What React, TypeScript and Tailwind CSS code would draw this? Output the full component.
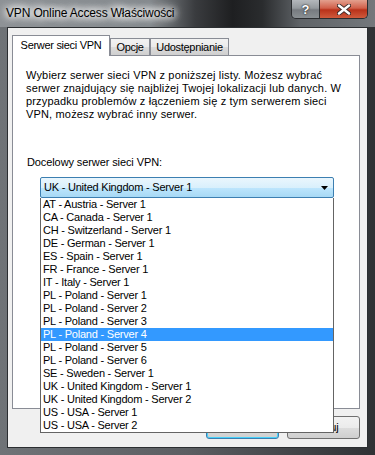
const servers = [
  "AT - Austria - Server 1",
  "CA - Canada - Server 1",
  "CH - Switzerland - Server 1",
  "DE - German - Server 1",
  "ES - Spain - Server 1",
  "FR - France - Server 1",
  "IT - Italy - Server 1",
  "PL - Poland - Server 1",
  "PL - Poland - Server 2",
  "PL - Poland - Server 3",
  "PL - Poland - Server 4",
  "PL - Poland - Server 5",
  "PL - Poland - Server 6",
  "SE - Sweden - Server 1",
  "UK - United Kingdom - Server 1",
  "UK - United Kingdom - Server 2",
  "US - USA - Server 1",
  "US - USA - Server 2",
];

const selected = "PL - Poland - Server 4";

function CaptionButtons() {
  return (
    <div className="mr-[7px] ml-auto flex h-[19px] overflow-hidden rounded-b-[5px] border border-t-0 border-[#2b2d30]">
      <div className="flex w-[28px] items-center justify-center border-r border-[#2b2d30] bg-[linear-gradient(180deg,#b4b8bc_0%,#959a9e_45%,#777b80_55%,#8a8f93_100%)] text-[13px] leading-none font-bold text-white [text-shadow:0_0_2px_#222,0_0_1px_#222]">
        ?
      </div>
      <div className="flex w-[47px] items-center justify-center bg-[linear-gradient(180deg,#e3a08e_0%,#d1604a_45%,#b9321a_55%,#cf5a3c_100%)]">
        <svg width="14" height="11" viewBox="0 0 14 11">
          <path d="M2 1.5 L12 9.5 M12 1.5 L2 9.5" stroke="#3a2a28" strokeWidth="4.2" strokeLinecap="round" />
          <path d="M2 1.5 L12 9.5 M12 1.5 L2 9.5" stroke="#ffffff" strokeWidth="2.4" strokeLinecap="round" />
        </svg>
      </div>
    </div>
  );
}

function Tab({ label, active, width }: { label: string; active?: boolean; width: string }) {
  if (active) {
    return (
      <div
        className={`relative z-10 mb-[-1px] flex h-[21px] items-center justify-center border border-b-0 border-[#898c95] bg-white pb-[1px] text-[11px] tracking-[-0.3px] text-black ${width}`}
      >
        {label}
      </div>
    );
  }
  return (
    <div
      className={`flex h-[17px] items-center justify-center border border-b-0 border-[#898c95] bg-[linear-gradient(180deg,#f2f2f2_0%,#ebebeb_50%,#dddddd_50%,#cfcfcf_100%)] pt-[1px] text-[11px] tracking-[-0.3px] text-black ${width}`}
    >
      {label}
    </div>
  );
}

export default function App() {
  return (
    <div className="relative flex h-[455px] w-[375px] flex-col overflow-hidden bg-[linear-gradient(90deg,#6f7377_0%,#5b5e62_50%,#2f3134_100%)] font-['Liberation_Sans',Arial,sans-serif] select-none">
      {/* title bar */}
      <div className="flex h-[27px] shrink-0 bg-[linear-gradient(90deg,#8e9296_0%,#858a8e_40%,#3a3c3f_52%,#1e1f21_62%,#2a2c2e_70%,#5f6367_80%,#74787c_100%)]">
        <div className="pt-[6px] pl-[6px] text-[12px] leading-[15px] tracking-[-0.15px] text-black [text-shadow:0_0_6px_#fff,0_0_8px_#fff,0_0_10px_#fff,0_0_12px_#fff]">
          VPN Online Access Właściwości
        </div>
        <CaptionButtons />
      </div>

      {/* client area */}
      <div className="mx-[7px] mb-[7px] flex flex-1 flex-col border border-[#2b2e31] bg-[#f0f0f0]">
        <div className="pt-[7px] pr-[7px] pl-[4px]">
          <div className="flex h-[20px] items-end">
            <Tab label="Serwer sieci VPN" active width="w-[98px]" />
            <Tab label="Opcje" width="w-[40px]" />
            <Tab label="Udostępnianie" width="w-[79px]" />
          </div>

          <div className="h-[354px] border border-[#898c95] bg-white pt-[13px] pl-[13px] text-[11px] leading-[13px] text-black">
            <div className="tracking-[0.16px] whitespace-nowrap">
              <div>Wybierz serwer sieci VPN z poniższej listy. Możesz wybrać</div>
              <div>serwer znajdujący się najbliżej Twojej lokalizacji lub danych. W</div>
              <div>przypadku problemów z łączeniem się z tym serwerem sieci</div>
              <div>VPN, możesz wybrać inny serwer.</div>
            </div>

            <div className="mt-[35px] pl-[1px] tracking-[-0.1px]">Docelowy serwer sieci VPN:</div>

            <div className="relative mt-[8px] ml-[14px] w-[294px] tracking-[-0.22px]">
              <div className="flex h-[21px] items-center rounded-[2px] border border-[#3c7fb1] bg-[linear-gradient(180deg,#eaf6fd_0%,#d9f0fc_50%,#bee6fd_50%,#a7d9f5_100%)] pl-[3px]">
                <span>UK - United Kingdom - Server 1</span>
                <svg className="mr-[5px] ml-auto" width="7" height="4" viewBox="0 0 7 4">
                  <path d="M0 0 H7 L3.5 4 Z" fill="#000" />
                </svg>
              </div>

              <div className="absolute top-full left-0 z-20 w-[294px] border border-t-0 border-[#646464] bg-white">
                {servers.map((s) => (
                  <div
                    key={s}
                    className={`h-[13px] pl-[2px] whitespace-nowrap ${s === selected ? "bg-[#3399ff] text-white" : "text-black"}`}
                  >
                    {s}
                  </div>
                ))}
              </div>
            </div>
          </div>
        </div>

        <div className="mt-[7px] flex justify-end gap-[8px] pr-[7px] text-[11px] text-black">
          <button className="h-[23px] w-[73px] rounded-[3px] border border-[#3c7fb1] bg-[linear-gradient(180deg,#f2f2f2_0%,#ebebeb_50%,#dddddd_50%,#cfcfcf_100%)] shadow-[inset_0_0_0_1px_#48d2f9]">
            OK
          </button>
          <button className="h-[23px] w-[73px] rounded-[3px] border border-[#707070] bg-[linear-gradient(180deg,#f2f2f2_0%,#ebebeb_50%,#dddddd_50%,#cfcfcf_100%)]">
            Anuluj
          </button>
        </div>
      </div>
    </div>
  );
}
